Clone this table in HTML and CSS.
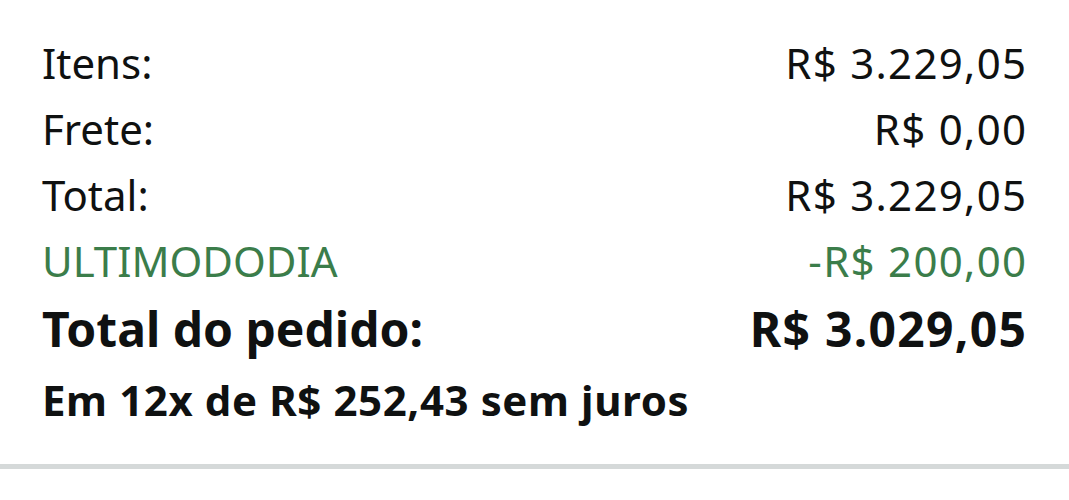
FILE: index.html
```html
<!DOCTYPE html>
<html lang="pt-BR">
<head>
  <meta charset="UTF-8">
  <meta name="viewport" content="width=device-width, initial-scale=1.0">
  <title>Resumo do pedido</title>
  <link rel="stylesheet" href="styles.css">
</head>
<body>
  <div class="summary">
    <div class="row">
      <span>Itens:</span>
      <span class="amount">R$ 3.229,05</span>
    </div>
    <div class="row">
      <span>Frete:</span>
      <span class="amount">R$ 0,00</span>
    </div>
    <div class="row">
      <span>Total:</span>
      <span class="amount">R$ 3.229,05</span>
    </div>
    <div class="row promo">
      <span>ULTIMODODIA</span>
      <span class="amount">-R$ 200,00</span>
    </div>
    <div class="row grand-total">
      <span>Total do pedido:</span>
      <span class="amount">R$ 3.029,05</span>
    </div>
    <div class="installments">Em 12x de R$ 252,43 sem juros</div>
  </div>
  <div class="divider"></div>
</body>
</html>
```

FILE: styles.css
```css
body {
  margin: 0;
  background-color: #fff;
  color: #0f1111;
  font-family: "Noto Sans", "Open Sans", sans-serif;
}
.summary {
  padding: 30px 43px 0 42px;
}
.row {
  display: flex;
  justify-content: space-between;
  font-size: 42px;
  line-height: 66px;
}
.amount {
  letter-spacing: 1.3px;
  margin-right: -1.3px;
}
.promo {
  color: #3b7d4a;
}
.grand-total {
  font-size: 48px;
  font-weight: bold;
  line-height: 70px;
}
.installments {
  font-size: 42px;
  font-weight: bold;
  line-height: 72px;
  letter-spacing: 0.6px;
}
.divider {
  height: 5px;
  margin-top: 28px;
  background-color: #d5d9d9;
}
```
